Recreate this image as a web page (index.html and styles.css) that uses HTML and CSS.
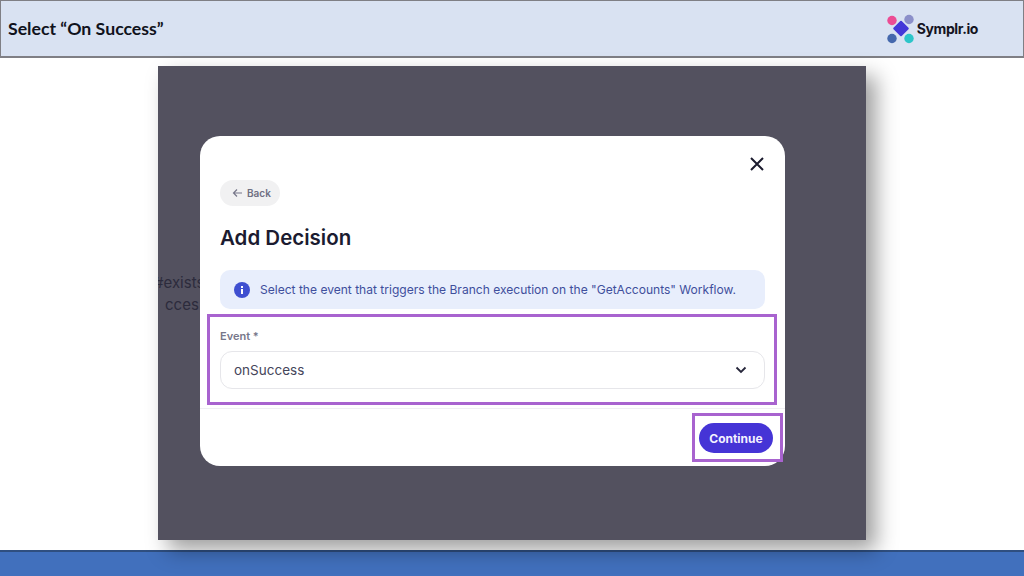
FILE: index.html
```html
<!DOCTYPE html>
<html lang="en">
<head>
  <meta charset="UTF-8">
  <title>Select On Success</title>
  <link rel="stylesheet" href="styles.css">
</head>
<body>
  <header class="topbar">
    <h1>Select “On Success”</h1>
    <div class="logo">
      <svg width="30" height="30" viewBox="0 0 30 30">
        <circle cx="6" cy="6.500" r="4.700" fill="#ec4c94"/>
        <circle cx="23" cy="5.500" r="4.700" fill="#8b8fc9"/>
        <circle cx="6" cy="24.500" r="4.700" fill="#4568ad"/>
        <circle cx="23" cy="24.500" r="4.700" fill="#2cc5c9"/>
        <rect x="9.200" y="8.700" width="11.600" height="11.600" rx="1" fill="#4338d8" transform="rotate(45 15 14.500)"/>
      </svg>
      <span>Symplr.io</span>
    </div>
  </header>

  <main class="stage">
    <div class="shot">
      <span class="ghost ghost-one">#exists</span>
      <span class="ghost ghost-two">cces</span>
      <div class="modal">
        <div class="modal-body">
          <div class="close-row">
            <svg width="16" height="16" viewBox="0 0 16 16"><path d="M2 2l12 12M14 2L2 14" stroke="#1b1b2e" stroke-width="2" fill="none"/></svg>
          </div>
          <div class="back">
            <svg width="11" height="10" viewBox="0 0 11 10"><path d="M10 5H1.500M5 1.500L1.500 5 5 8.500" stroke="#77778a" stroke-width="1.200" fill="none"/></svg>
            Back
          </div>
          <h2>Add Decision</h2>
          <div class="info">
            <svg width="16" height="16" viewBox="0 0 16 16">
              <circle cx="8" cy="8" r="8" fill="#3f4fd0"/>
              <rect x="7" y="7" width="2" height="5" fill="#fff"/>
              <rect x="7" y="4" width="2" height="2" fill="#fff"/>
            </svg>
            <span>Select the event that triggers the Branch execution on the "GetAccounts" Workflow.</span>
          </div>
          <label class="field-label">Event *</label>
          <div class="select">
            <span>onSuccess</span>
            <svg width="12" height="8" viewBox="0 0 12 8"><path d="M1.500 1.500L6 6l4.500-4.500" stroke="#26263a" stroke-width="1.800" fill="none"/></svg>
          </div>
        </div>
        <div class="modal-foot">
          <button class="continue">Continue</button>
        </div>
        <div class="mark mark-event"></div>
        <div class="mark mark-continue"></div>
      </div>
    </div>
  </main>

  <footer class="bottombar"></footer>
</body>
</html>
```

FILE: styles.css
```css
* {
  margin: 0;
  padding: 0;
  box-sizing: border-box;
}
body {
  display: flex;
  flex-direction: column;
  height: 576px;
  overflow: hidden;
  background: #fff;
  font-family: "Inter", "Liberation Sans", sans-serif;
}
.topbar {
  display: flex;
  justify-content: space-between;
  align-items: center;
  height: 58px;
  padding: 0 45px 0 7px;
  background: #d9e2f2;
  border: 1px solid #7f7f85;
  border-width: 1px 1px 2px 1px;
}
.topbar h1 {
  font-family: "Lato", sans-serif;
  font-size: 17.700px;
  font-weight: 700;
  color: #10121c;
}
.logo {
  display: flex;
  align-items: center;
  gap: 1px;
  font-size: 14px;
  font-weight: 700;
  letter-spacing: -0.4px;
  color: #14141f;
}
.stage {
  flex: 1;
  padding: 8px 0 0 158px;
}
.shot {
  position: relative;
  width: 708px;
  height: 474px;
  padding: 70px 0 0 42px;
  overflow: hidden;
  background: #53515f;
  box-shadow: 10px 10px 20px rgba(0, 0, 0, 0.38);
}
.ghost {
  position: absolute;
  font-size: 15px;
  color: #2c2b3c;
}
.ghost-one {
  left: -4px;
  top: 207px;
}
.ghost-two {
  left: 7px;
  top: 229px;
}
.modal {
  position: relative;
  width: 585px;
  height: 330px;
  background: #fff;
  border-radius: 20px;
}
.modal-body {
  height: 273px;
  padding: 20px 20px 0;
  border-bottom: 1px solid #efeff2;
}
.close-row {
  display: flex;
  justify-content: flex-end;
  height: 24px;
}
.back {
  display: flex;
  align-items: center;
  gap: 4px;
  width: 60px;
  height: 26px;
  padding-left: 12px;
  background: #f1f1f2;
  border-radius: 13px;
  font-size: 10px;
  font-weight: 600;
  color: #6f6f82;
}
h2 {
  margin-top: 20px;
  font-size: 20.500px;
  font-weight: 600;
  line-height: 24px;
  color: #1b1b30;
}
.info {
  display: flex;
  align-items: center;
  gap: 10px;
  height: 39px;
  margin-top: 20px;
  padding-left: 14px;
  background: #e8eefc;
  border-radius: 10px;
  font-size: 12.050px;
  color: #3f4f9c;
}
.field-label {
  display: block;
  margin-top: 20px;
  font-size: 11px;
  font-weight: 600;
  line-height: 14px;
  color: #77778a;
}
.select {
  display: flex;
  justify-content: space-between;
  align-items: center;
  height: 38px;
  margin-top: 8px;
  padding: 0 17px 1px 13px;
  border: 1px solid #e6e6ea;
  border-radius: 12px;
  font-size: 13.500px;
  color: #45455a;
}
.modal-foot {
  display: flex;
  justify-content: flex-end;
  padding: 14px 12px 0 0;
}
.continue {
  width: 74px;
  height: 30px;
  border: none;
  border-radius: 15px;
  background: #4534d6;
  font-family: inherit;
  font-size: 12px;
  font-weight: 700;
  color: #f3f1ff;
}
.mark {
  position: absolute;
  border: 3px solid #a863cf;
}
.mark-event {
  left: 7px;
  top: 178px;
  width: 570px;
  height: 91px;
}
.mark-continue {
  left: 492px;
  top: 277px;
  width: 91px;
  height: 49px;
}
.bottombar {
  height: 26px;
  background: #4170bd;
  border-top: 2px solid #2f4f80;
}
```
